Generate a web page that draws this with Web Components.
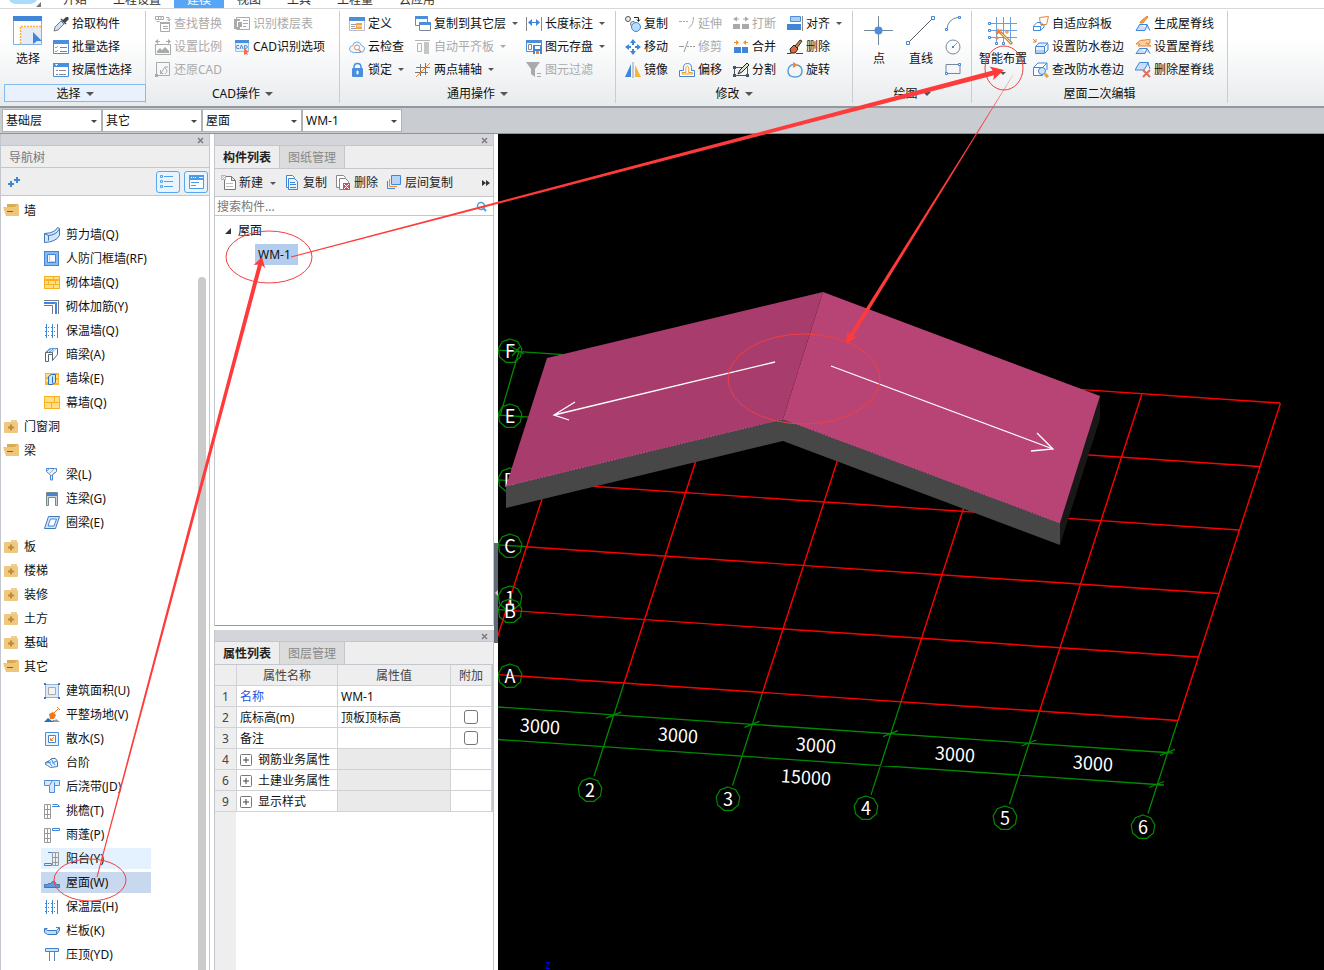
<!DOCTYPE html>
<html lang="zh-CN">
<head>
<meta charset="utf-8">
<title>建模</title>
<style>
html,body{margin:0;height:100%}
body{font:12px/16px "Noto Sans","Noto Sans CJK SC",sans-serif;color:#111;overflow:hidden}
</style>
</head>
<body>
<cad-shell></cad-shell>
<script>
const ICONS = {
  pick:'<path d="M1 15l1-4 6-6 3 3-6 6z" fill="#cfe2f6" stroke="#778"/><path d="M8 3l5 5M10 5l3-3q2-1 2 1l-3 3z" stroke="#444" stroke-width="1.500" fill="#444"/>',
  batch:'<path d="M.5 1.500h15v13H.5z" fill="#fff" stroke="#4a8fdc"/><path d="M0 1h16v4H0z" fill="#4a8fdc"/><path d="M2 8l1 1 2-2M2 12l1 1 2-2" stroke="#f0883a"/><path d="M7 8.500h7M7 12.500h7" stroke="#4a8fdc"/>',
  prop:'<path d="M.5 1.500h15v13H.5z" fill="#fff" stroke="#4a8fdc"/><path d="M0 1h16v4H0z" fill="#4a8fdc"/><path d="M2 2h3l-1.500 2z" fill="#fff"/><path d="M3 8.500h2m1 0h7M3 12.500h2m1 0h7" stroke="#889"/>',
  find:'<path d="M.5.5h8v3h-8zM3.500 1v2M6 1v2M11 1.500h3v3M12.500 3l1.500 2 1.500-2M5.500 6.500h9v9h-9zM8 10.500h5M8 12.500h5M1.500 5.500h3" stroke="#aaa"/><path d="M5 6h10v2H5z" fill="#aaa"/>',
  scale:'<path d="M.5 5.500h15v10H.5z" stroke="#aaa"/><path d="M2 14v-2l3-3 2 2 3-3 4 4v2zM0 2.500L3 0v5zM16 2.500L13 0v5z" fill="#aaa"/><path d="M2 2.500h3M11 2.500h3" stroke="#aaa"/>',
  restore:'<path d="M1.500.5h13v13h-13zM5.500 8v3.500h3M6 11l4-6h3M10 12q4-3 0-6" stroke="#aaa"/><path d="M0 12h3v3H0z" fill="#aaa"/>',
  floors:'<path d="M2.500 1.500h13v12h-13z" stroke="#aaa"/><path d="M0 3h6v2H2v6h4v2H0z" fill="#aaa"/><path d="M4 6h4v5H4z" fill="#aaa"/><path d="M9 4.500h5M9 7.500h5M9 10.500h3" stroke="#aaa"/>',
  cadopt:'<path d="M1.500 1.500h13v11h-13z" fill="#e5effb" stroke="#9cc2ee"/><path d="M1 1h14v3H1z" fill="#4a8fdc"/><path d="M5 6.500q-3-.5-3 1.500t3 1.500M6 10l1.500-4L9 10M10.500 6.500v3q3 0 3-1.500t-3-1.500" stroke="#4a8fdc"/><path d="M10 9l5 4-2 .5L14 16l-2-1-2 1z" fill="#f0704a"/>',
  define:'<path d="M.5 1.500h15v13H.5z" fill="#fff" stroke="#bbc"/><path d="M0 1h16v4H0z" fill="#4a8fdc"/><path d="M2 8.500h5M2 10.500h4M2 12.500h5" stroke="#99a"/><path d="M7 7h6v6H7z" fill="#f5a53c"/><path d="M8 10h5" stroke="#fff"/>',
  cloud:'<path d="M4.500 13.500h7q4-.5 4-3.500t-3-3.500Q11 2.500 7.500 3T4 6.500Q.5 7 .5 10t4 3.500z" stroke="#6aa7e8" fill="#f4f9ff"/><circle cx="8" cy="8.500" r="2.500" stroke="#e88040" fill="#fff"/><path d="M10 11l2 2" stroke="#e88040" stroke-width="1.500"/>',
  lock:'<path d="M5 8V5q0-3.500 3.500-3.500T12 5v3" stroke="#4a8fdc" stroke-width="1.500"/><rect x="3" y="6" width="11" height="9" rx="1" fill="#4a8fdc"/><path d="M8 9h1v3H8z" fill="#fff" stroke="#fff"/>',
  copyfloor:'<path d="M.5 1.500h12v8H.5z" fill="#fff" stroke="#7d8793"/><path d="M0 0h13v3H0z" fill="#4a8fdc"/><path d="M4.500 7.500h11v7h-11z" fill="#fff" stroke="#7d8793"/><path d="M4 6h12v3H4z" fill="#4a8fdc"/>',
  align2:'<path d="M0 1.500h15M2.500 4.500h4v8h-4z" stroke="#b5b5b5"/><path d="M9 3h5v12H9z" fill="#c5c5c5"/>',
  axis:'<path d="M1 5.500h14M0 10.500h13M5.500 2v12M10.500 1v12" stroke="#777"/><path d="M1 15L15 1" stroke="#f09050"/>',
  length:'<path d="M.5 1v14M15.500 1v14" stroke="#888"/><path d="M2 6.500L6 3v7zM14 6.500L10 3v7z" fill="#3f86d8"/><path d="M4 6.500h8" stroke="#3f86d8"/>',
  save:'<path d="M.5 1.500h15v11H.5z" fill="#fff" stroke="#4a8fdc"/><path d="M0 1h16v3H0z" fill="#4a8fdc"/><path d="M2.500 5.500h3v5h-3z" stroke="#888"/><path d="M7 6h9v9H7z" fill="#3f86d8"/><path d="M9 7h5v3H9z" fill="#fff"/><path d="M9 12h5v3H9z" fill="#fff"/><path d="M10 12h3v3h-3z" fill="#f08030"/>',
  filter:'<path d="M0 0h14L9 7v8l-4-3V7z" fill="#aaa"/><path d="M11 11.500h4M11 14.500h4" stroke="#aaa"/>',
  copy:'<circle cx="3" cy="3" r="2.500" stroke="#555" fill="#eee"/><path d="M9 1.500h4.500V5M12 3.500l1.500 2 1.500-2" stroke="#222"/><circle cx="8" cy="8" r="2.500" fill="#eee" stroke="#678"/><circle cx="11" cy="11" r="4.500" fill="#b9dcfa" stroke="#3a8bcb"/>',
  extend:'<path d="M0 5.500h3m1 0h2m1 0h2M14.500 1q0 8-5 11" stroke="#aaa"/>',
  breaks:'<path d="M0 8h7v5H0zM9 8h7v5H9zM0 3l4-2.500v5zM16 3l-4-2.500v5z" fill="#aaa"/><path d="M3 3h3M10 3h3" stroke="#aaa"/>',
  align:'<path d="M3.500.5h10v5h-10z" fill="#a9cdf5" stroke="#4a8fdc"/><path d="M0 8h14v6H0z" fill="#3f86d8"/><path d="M15.500 0v15" stroke="#888"/>',
  move:'<path d="M8 0l3 4H5zM8 16l3-4H5zM0 8l4-3v6zM16 8l-4-3v6z" fill="#3f86d8"/><path d="M8 4v2M8 10v2M4 8h2M10 8h2" stroke="#3f86d8" stroke-width="2"/>',
  trim:'<path d="M0 7.500h5m3 0h2m1 0h2m1 0h2M9 2L5 13" stroke="#999"/>',
  merge:'<path d="M1 8h7v6H1zM9 8h6v6H9z" fill="#3f86d8"/><path d="M6 3.500L3 1v5zM10 3.500L13 1v5z" fill="#f09030"/><path d="M1 3.500h3M12 3.500h3" stroke="#f09030"/>',
  erase:'<path d="M0 14.500h4m5 0h7" stroke="#444"/><path d="M8 7l5-6 2 1-5 7z" fill="#c08a50" stroke="#333"/><path d="M3 10l4-4 4 4-3 4H4z" fill="#e06a40" stroke="#222"/>',
  mirror:'<path d="M6 2v13H0z" fill="#3f86d8"/><path d="M10 3v12h6z" fill="#f5b43c"/><path d="M8 0v16" stroke="#999"/>',
  offset:'<path d="M.5 14.500v-6h4q-1-7 4-7 5 0 4 7h3v6z" stroke="#3f86d8" fill="#fff"/><path d="M3 12V10.500h4q-1-6 1.500-6.500 2 1 1 6.500h4V12z" stroke="#f0a030"/>',
  split:'<path d="M1.500 5.500h13v8h-13z" stroke="#555"/><path d="M0 4h3v3H0zM0 12h3v3H0zM13 12h3v3h-3z" fill="#456"/><path d="M5 12l2-4 7-7 2 2-7 7z" fill="#dfe5cc" stroke="#222"/>',
  rotate:'<path d="M10 3q5 1 5 6 0 6-7 6T1 9q0-5 5-6.500" stroke="#5ca0dc" stroke-width="1.500"/><path d="M6 0l5 3-5 3z" fill="#f08a30"/>',
  arc:'<path d="M2 14Q2 3 14 1" stroke="#789"/><path d="M.5 12.500h2v2h-2zM13.500.5h2v2h-2z" fill="#fff" stroke="#3f86d8"/>',
  circle:'<circle cx="8" cy="8" r="7" stroke="#789"/><path d="M8 8l4-4" stroke="#999"/><path d="M7 7h2v2H7z" fill="#3f86d8"/>',
  rect:'<path d="M1 2.500h14v9H1z" stroke="#789"/><path d="M.5 10.500h2v2h-2zM13.500 1.500h2v2h-2z" fill="#fff" stroke="#3f86d8"/>',
  slope:'<path d="M6.500 1.500l9-1-2 8-6 0z" stroke="#f08030" fill="#fff"/><path d="M.5 10.500h7v4h-7zM.5 10L4 6.500h4l2 2-2.500 2M8 14l3-3V9" stroke="#3f86d8"/>',
  water:'<path d="M2.500 7.500h9v7h-9zM3 7l3-3h9l-3 3M12 14l3-3V5" stroke="#3f86d8" fill="#e4f0fd"/><path d="M3 11h8v3H3z" fill="#a9cdf5"/><path d="M0 0l3 3M3 0v3H0" stroke="#f08030"/>',
  checkwater:'<path d="M.5 5.500h9v8h-9zM1 5l4-4h9l-4 4M14 1v7" stroke="#3f86d8" fill="#fff"/><circle cx="9" cy="9" r="3.500" fill="#cfe3fa" stroke="#3f86d8"/><path d="M12 12l3 3" stroke="#f0a030" stroke-width="3"/>',
  ridge:'<path d="M5 8.500h7l3 6M5 8L1 14.500h9l2-6" stroke="#3f86d8" fill="#c9defa"/><path d="M5 7l1-2 6-5 1 1-5 6z" fill="#f5a050" stroke="#f08030"/>',
  setridge:'<path d="M5 9.500h7l3 5M5 9L1 14.500h9l2-5" stroke="#3f86d8" fill="#c9defa"/><path d="M1 5q4-5 9-4l5-1v4q-3 1-4 0l5 3H3l2-2z" fill="#fbd0a0" stroke="#f08030"/>',
  delridge:'<path d="M4.500.5h9L9 8H0zM13 1l2 6" stroke="#3f86d8" fill="#c9defa"/><path d="M8 8l7 7M15 8l-7 7" stroke="#e07060" stroke-width="2"/>',
  open:'<path d="M4 1h11v3H4z" fill="#dbab52"/><path d="M0 4h12l1-2h3v11H3z" fill="#efc57a"/><path d="M4 8h6v1H4z" fill="#806030"/>',
  folder:'<path d="M8 1h6v2H8z" fill="#e9d09c"/><rect x="1" y="3" width="14" height="11" rx="1" fill="#f0c880"/><path d="M5 8.500h6M8 5.500v6" stroke="#c08c30" stroke-width="2"/>',
  shear:'<path d="M.5 6.500Q11 6 13.500.5l2 1v7Q12 15 .5 15.500z" stroke="#3f78b8" fill="#d5e6fa"/><path d="M.5 6.500l4 2v5M4.500 8.500Q12 8 15.500 2" stroke="#3f78b8"/>',
  frame:'<path d="M0 0h15v15H0z" fill="#3f86d8"/><path d="M1 1h13v13H1z" fill="#8ab8ee"/><path d="M3.500 3.500h8v8h-8z" fill="#fff" stroke="#3f86d8"/><path d="M5.500 4v6.500h5" stroke="#bcd"/>',
  brick:'<path d="M0 1h16v13H0z" fill="#fbb020"/><path d="M1 2h8v2H1zM10 2h5v2h-5zM1 6h3v3H1zM5 6h6v3H5zM12 6h3v3h-3zM1 10h8v3H1zM10 10h5v3h-5z" fill="#ffe08a"/>',
  rebar:'<path d="M0 1.500h14.500V15M0 6.500h8.500V15" stroke="#778"/><path d="M0 4.500h11.500V15M0 3.500h12.500V15" stroke="#3f86d8"/>',
  insul:'<path d="M2.500 1v14M8.500 1v14M13.500 1v14" stroke="#3f86d8"/><path d="M1 4.500h13M1 8.500h13M1 12.500h13" stroke="#3f86d8" stroke-dasharray="1 2"/>',
  beamA:'<path d="M1.500 5.500l5-4h7v6l-5 6V6M1.500 5.500h7v1M1.500 5.500v9h3v-7h4" stroke="#567"/><path d="M2 5l4-4h7l-4 4z" fill="#5a9be0"/><path d="M4 5l4-3M7 5l4-3" stroke="#fff"/>',
  pier:'<path d="M1 2h14v12H1z" fill="#fcb42c"/><path d="M2 3h4v3H2zM11 4h3v3h-3zM2 8h3v3H2zM11 9h3v3h-3z" fill="#ffe08a"/><path d="M4.500 5.500l3-2h4v8l-3 2h-4zM8.500 5.500v7" stroke="#2a70c0" fill="#cfe3fa"/>',
  curtain:'<path d="M0 1h16v13H0z" fill="#fbb020"/><path d="M1 2h9v5H1zM11 2h4v5h-4zM1 8h6v5H1zM8 8h7v5H8z" fill="#ffe08a"/>',
  tee:'<path d="M2.500 1.500h10v3l-4 3.500v5h-2V8l-4-3.500z" stroke="#3f86d8" fill="#e8f2fd"/><path d="M3 4l3-3M6 6l5-5M7 9l4-4" stroke="#9ab"/>',
  link:'<path d="M2.500 1.500h11v13h-2v-8h-7v8h-2z" fill="#cfd5dc" stroke="#788"/><path d="M3 2h10v3H3z" fill="#3f86d8"/>',
  ring:'<path d="M4.500 1.500h11l-4 12H.5z" stroke="#3f78b8" fill="#d5e6fa"/><path d="M6.500 4h6L10 11H4z" stroke="#3f86d8" fill="#fff"/>',
  area:'<path d="M1.500 1.500h13v13h-13z" fill="#dceafb" stroke="#8fb3dc"/><path d="M4.500 4.500h7v7h-7z" stroke="#aaa" fill="#f3f3f3"/><path d="M0 0h2v2H0zM14 0h2v2h-2zM0 14h2v2H0zM14 14h2v2h-2z" fill="#3f78b8"/>',
  ground:'<path d="M0 15l4-4 4 3 2-1 2 2z" fill="#2a70b8"/><path d="M9 15l3-3 4 3z" fill="#999"/><path d="M5 7l4-2 3 3-2 4H6z" fill="#f07818"/><path d="M10 6l5-5M13 0l3 3" stroke="#f07818"/>',
  apron:'<path d="M1.500 1.500h13v13h-13z" stroke="#4a8fdc" fill="#e9f3fe"/><path d="M4.500 4.500h7v7h-7z" stroke="#3f86d8" fill="#fff"/><path d="M10 6l-3 3M6.500 7v2.500H9" stroke="#f08030"/>',
  steps:'<path d="M1.500 7.500l4-2 2-2h4l2 3 0 5-7 1-3-2-2-1z" stroke="#3f78b8" fill="#eaf3fe"/><path d="M4 6l4 5M7 4l4 6M2 8l5-1M8 8l5-2" stroke="#3f86d8"/>',
  pour:'<path d="M.5 1.500h15v5h-5v7h-5v-7h-5zM5.500 6.500l3-5M10.500 6.500V3" stroke="#4a8fdc" fill="#d9e9fb"/>',
  eave:'<path d="M.5 1.500h6v14h-6zM3.500 2v13M1 6.500h5M1 11.500h5" stroke="#999"/><path d="M8.500 1.500h5l2 2M8 3.500h8" stroke="#3f86d8"/>',
  canopy:'<path d="M.5 1.500h6v14h-6zM3.500 2v13M1 6.500h5M1 11.500h5" stroke="#999"/><path d="M8.500 1.500h7v2h-7z" stroke="#3f86d8"/>',
  balcony:'<path d="M8.500 1.500h6v13h-6zM11.500 2v13M9 6.500h5M9 11.500h5" stroke="#999"/><path d="M4 1.500h4M.5 12.500h7v2h-7z" stroke="#3f86d8"/>',
  roof:'<path d="M.5 12.500v-3h3l1-1h2l2-2h2l2 3h3v3z" fill="#5a9be0" stroke="#3f78b8"/>',
  panel:'<path d="M.5 5.500l3 2h9l3-3v3l-3 4h-9l-3-2z" stroke="#3f78b8" fill="#bfd9f6"/><path d="M12.500 7.500v4M.5 5.500h3M12 4.500h3" stroke="#3f86d8"/>',
  coping:'<path d="M1.500 1.500h13v3h-13z" stroke="#3f86d8" fill="#cfe3fa"/><path d="M5.500 5v9M10.500 5v9" stroke="#5a86b8"/>',
  plus2:'<path d="M4 7v6M1 10h6M10 3v6M7 6h6" stroke="#3f86d8" stroke-width="2"/>',
  list:'<path d="M.5 1.500h2v2h-2zM.5 6.500h2v2h-2zM.5 11.500h2v2h-2zM4 2.500h9M4 7.500h9M4 12.500h9" stroke="#4fa3e8"/>',
  window:'<path d="M1.500 1.500h14v13h-14z" stroke="#4a9be8" fill="#fff"/><path d="M1 1h15v5H1z" fill="#4a9be8"/><path d="M3 3.500h1m1 0h1m1 0h1M11 3.500h4" stroke="#fff"/><path d="M3 8.500h8M3 11.500h5" stroke="#4a9be8"/>',
  newdoc:'<path d="M3.500 1.500h7l4 4v9h-11zM10.500 1.500v4h4" stroke="#777" fill="#fff"/><path d="M5 8.500h7M5 11.500h7" stroke="#bbb"/><path d="M0 0h5v5H0z" fill="#f5b040"/><path d="M1 1h1v1H1zM3 1h1v1H3zM2 2h1v1H2zM1 3h1v1H1zM3 3h1v1H3z" fill="#fff"/>',
  doc:'<path d="M1.500.5h6l2 2v10h-8z" stroke="#3f86d8" fill="#fff"/><path d="M3.500 3.500h6l3 3v8h-9z" stroke="#3f86d8" fill="#e9f3fe"/><path d="M5 7.500h5M5 9.500h6M5 12.500h6" stroke="#3f86d8"/>',
  deldoc:'<path d="M.5.5h7l2 2v10h-9z" stroke="#888" fill="#fff"/><path d="M3.500 3.500h6l3 3v8h-9z" stroke="#888" fill="#fff"/><path d="M7 8h7v7H7z" fill="#d05050"/><path d="M8 9l5 5M13 9l-5 5" stroke="#fff"/>',
  layers:'<path d="M4.500.5h9v9h-9z" fill="#b4d4fa" stroke="#3f86d8"/><path d="M2.500 4v7.500H10" stroke="#f08a30"/><path d="M.5 6v7.500H8" stroke="#3f86d8"/>',
  search:'<circle cx="8" cy="8" r="3.500" stroke="#4aa0d8" stroke-width="1.500"/><path d="M10 10l3 3" stroke="#4aa0d8" stroke-width="2"/>',
  // thirty-pixel icons
  bigselect:'<path d="M.5.5h28v28H.5z" fill="#fff" stroke="#7db0e8"/><path d="M0 0h29v5H0z" fill="#3f86d8"/><path d="M8 11h20v17H8z" fill="#e6ebf5"/><path d="M7.500 28V10.500H28" stroke="#f5b43c" stroke-width="1.500" stroke-dasharray="2 1"/><path d="M20 16l9 9h-5l-4 3z" fill="#3f86d8"/>',
  bigpoint:'<path d="M14.500 0v29M0 14.500h29" stroke="#789"/><circle cx="14.500" cy="14.500" r="4" fill="#4a8fdc"/>',
  bigline:'<path d="M2 27L27 2" stroke="#556"/><path d="M.5 25.500h3v3h-3zM25.500.5h3v3h-3z" fill="#fff" stroke="#3f86d8"/>',
  biggrid:'<path d="M0 7.500h29M0 14.500h29M0 21.500h29M8.500 1v27M15.500 1v27M22.500 1v27" stroke="#6a9fe0"/><path d="M.5 6.500h2v2h-2zM.5 13.500h2v2h-2zM.5 20.500h2v2h-2zM7.500 26.500h2v2h-2zM14.500 26.500h2v2h-2z" fill="#fff" stroke="#3f86d8"/><path d="M12 16l12 12" stroke="#c88a40" stroke-width="3"/><path d="M13 17l10 10" stroke="#fbe0b0"/><path d="M10 12l1 2 3-1-2 3 2 2-3-1-2 2v-2l-2-1 2-1z" fill="#f08030"/><path d="M19 14v4M17 16h4M9 20v4M7 22h4" stroke="#f08030"/>'
};

/* Defines an element whose open shadow root is filled by render(host). */
function define(tag, css, render) {
  customElements.define(tag, class extends HTMLElement {
    connectedCallback() {
      if (this.shadowRoot) return;
      const root = this.attachShadow({mode: 'open'});
      root.innerHTML = `<style>*{box-sizing:border-box}button,select,input{font:inherit;color:inherit;margin:0}${css}</style>${render(this)}`;
    }
  });
}
const attr = (el, n) => el.getAttribute(n) || '';

define('ui-icon', ':host{display:block;flex:none;width:16px;height:16px}:host([big]){width:30px;height:30px}svg{display:block;width:100%;height:100%}',
  el => { const s = el.hasAttribute('big') ? 30 : 16;
    return `<svg viewBox="0 0 ${s} ${s}" fill="none" aria-hidden="true">${ICONS[attr(el, 'name')]}</svg>`; });

define('menu-strip', `
  :host{display:block;flex:none;height:9px;overflow:hidden;background:#fff;border-bottom:1px solid #d8d8d8}
  nav{display:flex;align-items:flex-end;height:8px}
  a{flex:none;padding:8px 13px 0;line-height:16px;color:#333;text-decoration:none}
  a[aria-current]{background:#56a6f5;color:#fff}
  .logo{flex:none;width:50px;height:28px}`,
  () => `<nav><svg class="logo" viewBox="0 0 50 28"><rect x="8" y="2" width="30" height="22" rx="8" fill="#a8dcfa"/><rect x="16" y="6" width="14" height="14" rx="5" fill="#7ec8f4"/><path d="M41 22v5h-5z" fill="#777"/></svg>
  ${['开始','工程设置','建模','视图','工具','工程量','云应用'].map(t => `<a href="#"${t === '建模' ? ' aria-current="page"' : ''}>${t}</a>`).join('')}</nav>`);

define('tool-button', `
  :host{display:flex;height:23px}
  button{display:flex;align-items:center;gap:3px;padding:0;border:0;background:none;white-space:nowrap}
  button:disabled{color:#aaa}
  i{margin-left:3px;border:3px solid transparent;border-top-color:#555;border-bottom:0}
  button:disabled i{border-top-color:#aaa}
  :host([big]){height:69px}
  :host([big]) button{flex-direction:column;justify-content:flex-start;padding-top:4px;gap:5px}
  :host([big]) i{margin:0}`,
  el => `<button type="button"${el.hasAttribute('off') ? ' disabled' : ''} aria-label="${attr(el, 'label') || attr(el, 'icon')}"><ui-icon name="${attr(el, 'icon')}"${el.hasAttribute('big') ? ' big' : ''}></ui-icon>${attr(el, 'label') ? `<span>${attr(el, 'label')}</span>` : ''}${el.hasAttribute('drop') ? '<i></i>' : ''}</button>`);

define('ribbon-group', `
  :host{display:flex;flex-direction:column;flex:none;margin:2px 0 3px;padding-top:1px;border-right:1px solid #c9ccd0}
  .tools{display:flex;height:69px}
  footer{display:flex;align-items:center;justify-content:center;gap:5px;height:18px;margin-top:3px;padding-top:2px}
  :host([active]) footer{margin-left:4px;margin-right:-1px;border:1px solid #86b9f0;background:#e9f2fc}
  i{border:4px solid transparent;border-top-color:#555;border-bottom:0}`,
  el => `<div class="tools"><slot></slot></div><footer><span>${attr(el, 'caption')}</span>${el.hasAttribute('plain') ? '' : '<i></i>'}</footer>`);

const tool = ([icon, label = '', flags = '']) => `<tool-button icon="${icon}" label="${label}" ${flags}></tool-button>`;
const column = (left, ...tools) => `<div style="margin-left:${left}px">${tools.map(tool).join('')}</div>`;
const fixed = (left, width, ...tools) => `<div style="margin-left:${left}px;width:${width}px">${tools.map(tool).join('')}</div>`;
define('ribbon-bar', `
  :host{display:flex;flex:none;height:99px;background:linear-gradient(#fff 30%,#e8ebed);border-bottom:2px solid #94979c;overflow:hidden}`,
  () => `
  <ribbon-group caption="选择" active style="width:146px">${column(13,['bigselect','选择','big'])}${column(10,['pick','拾取构件'],['batch','批量选择'],['prop','按属性选择'])}</ribbon-group>
  <ribbon-group caption="CAD操作" style="width:194px">${fixed(9,79,['find','查找替换','off'],['scale','设置比例','off'],['restore','还原CAD','off'])}${column(0,['floors','识别楼层表','off'],['cadopt','CAD识别选项'])}</ribbon-group>
  <ribbon-group caption="通用操作" style="width:276px">${fixed(9,66,['define','定义'],['cloud','云检查'],['lock','锁定','drop'])}${fixed(0,111,['copyfloor','复制到其它层','drop'],['align2','自动平齐板','drop off'],['axis','两点辅轴','drop'])}${column(0,['length','长度标注','drop'],['save','图元存盘','drop'],['filter','图元过滤','off'])}</ribbon-group>
  <ribbon-group caption="修改" style="width:237px">${fixed(9,54,['copy','复制'],['move','移动'],['mirror','镜像'])}${fixed(0,54,['extend','延伸','off'],['trim','修剪','off'],['offset','偏移'])}${fixed(0,54,['breaks','打断','off'],['merge','合并'],['split','分割'])}${column(0,['align','对齐','drop'],['erase','删除'],['rotate','旋转'])}</ribbon-group>
  <ribbon-group caption="绘图" style="width:119px">${column(11,['bigpoint','点','big'])}${column(12,['bigline','直线','big'])}${column(9,['arc'],['circle'],['rect'])}</ribbon-group>
  <ribbon-group caption="屋面二次编辑" plain style="width:256px">${column(7,['biggrid','智能布置','big drop'])}${fixed(6,102,['slope','自适应斜板'],['water','设置防水卷边'],['checkwater','查改防水卷边'])}${column(0,['ridge','生成屋脊线'],['setridge','设置屋脊线'],['delridge','删除屋脊线'])}</ribbon-group>`);

define('scope-bar', `
  :host{display:flex;flex:none;align-items:center;height:26px;padding-left:2px;background:#c9ccd1;border-bottom:1px solid #8f9298}
  .box{position:relative;display:flex}
  select{width:100px;height:23px;padding:0 3px;border:1px solid #b0b2b6;border-radius:0;background:#fff;appearance:none}
  .box:first-child select{border-color:#8497c8}
  .box::after{content:"";position:absolute;right:5px;top:11px;border:3px solid transparent;border-top-color:#444;border-bottom:0;pointer-events:none}`,
  () => ['基础层','其它','屋面','WM-1'].map((t, i) => `<label class="box"><select aria-label="${['楼层','类别','构件类型','构件'][i]}"><option>${t}</option></select></label>`).join(''));

define('panel-title', `
  :host{display:flex;flex:none;justify-content:flex-end;height:12px;background:#d3d5da;border-bottom:1px solid #c3c6cc}
  button{display:flex;align-items:flex-end;justify-content:center;width:18px;padding:0 0 1px;border:0;background:none}
  svg{width:7px;height:7px}`,
  () => '<button type="button" aria-label="关闭"><svg viewBox="0 0 7 7"><path d="M1 1l5 5M6 1L1 6" stroke="#777" stroke-width="1.300"/></svg></button>');

const TREE = [
  ['墙', [['shear','剪力墙(Q)'],['frame','人防门框墙(RF)'],['brick','砌体墙(Q)'],['rebar','砌体加筋(Y)'],['insul','保温墙(Q)'],['beamA','暗梁(A)'],['pier','墙垛(E)'],['curtain','幕墙(Q)']]],
  ['门窗洞'],
  ['梁', [['tee','梁(L)'],['link','连梁(G)'],['ring','圈梁(E)']]],
  ['板'], ['楼梯'], ['装修'], ['土方'], ['基础'],
  ['其它', [['area','建筑面积(U)'],['ground','平整场地(V)'],['apron','散水(S)'],['steps','台阶'],['pour','后浇带(JD)'],['eave','挑檐(T)'],['canopy','雨蓬(P)'],['balcony','阳台(Y)','hover'],['roof','屋面(W)','selected'],['insul','保温层(H)'],['panel','栏板(K)'],['coping','压顶(YD)']]]
];
define('nav-tree', `
  :host{display:flex;flex-direction:column;flex:none;width:210px;background:#fff;border:solid #c3c6cc;border-width:0 1px}
  h2{flex:none;height:22px;margin:0;padding-left:8px;font:inherit;line-height:23px;color:#777;background:#eee;border-bottom:1px solid #c3c6cc}
  .bar{display:flex;flex:none;align-items:center;gap:4px;height:28px;padding:0 1px 0 6px;background:#eee;border-bottom:1px solid #c3c6cc}
  .bar button{display:flex;align-items:center;justify-content:center;width:24px;height:22px;padding:0;border:1px solid #58a8f0;border-radius:3px;background:#eaf4fe}
  .bar .add{width:16px;margin-right:auto;border:0;background:none}
  .body{display:flex;flex:1;min-height:0}
  ul{margin:0;padding:0;list-style:none}
  .tree{flex:1;padding-top:3px;overflow:hidden}
  .row{display:flex;align-items:center;height:24px;padding:0;border:0;background:none}
  .parent{gap:5px;padding-left:2px}
  .row.leaf{align-items:flex-start;padding:1px 0 0 40px}
  .leaf span{display:flex;align-items:center;gap:6px;height:21px;min-width:110px;padding:0 3px}
  .hover span{background:#e4f1fe}.selected span{background:#c8d8ef}
  .track{flex:none;width:8px;margin:81px 3px 0 0;border-radius:4px 4px 0 0;background:#cbcbcb}`,
  () => `<panel-title></panel-title><h2>导航树</h2>
  <div class="bar"><button class="add" type="button" aria-label="添加"><ui-icon name="plus2"></ui-icon></button><button type="button" aria-label="列表"><ui-icon name="list"></ui-icon></button><button type="button" aria-label="窗口"><ui-icon name="window"></ui-icon></button></div>
  <div class="body"><ul class="tree">${TREE.map(([name, kids]) => `<li><button type="button" class="row parent" aria-expanded="${!!kids}"><ui-icon name="${kids ? 'open' : 'folder'}"></ui-icon>${name}</button>${kids ? `<ul>${kids.map(([icon, label, state = '']) => `<li><button type="button" class="row leaf ${state}"><span><ui-icon name="${icon}"></ui-icon>${label}</span></button></li>`).join('')}</ul>` : ''}</li>`).join('')}</ul><div class="track"></div></div>`);

define('dock-panel', `
  :host{display:flex;flex-direction:column;background:#fff;border:solid #c3c6cc;border-width:0 1px}
  .tabs{display:flex;flex:none;height:23px;background:#eee;border-bottom:1px solid #c3c6cc}
  button{width:65px;padding:2px 0 0;border:0;border-right:1px solid #c3c6cc;background:#dcdcdc;color:#888}
  button:first-child{background:#eee;color:#222;font-weight:700}`,
  el => `<panel-title></panel-title><div class="tabs" role="tablist">${attr(el, 'tabs').split(',').map((t, i) => `<button type="button" role="tab" aria-selected="${!i}">${t}</button>`).join('')}</div><slot></slot>`);

define('component-list', `
  :host{display:flex;flex-direction:column;flex:1}
  .bar{display:flex;flex:none;align-items:center;height:28px;padding:1px 3px 0 6px;background:#eee;border-bottom:1px solid #c3c6cc;color:#222}
  .bar button{display:flex;align-items:center;gap:2px;padding:0;margin-right:9px;border:0;background:none;white-space:nowrap}
  .bar i{margin-left:5px;border:3px solid transparent;border-top-color:#555;border-bottom:0}
  .bar .more{margin:0 0 0 auto}
  .find{display:flex;flex:none;align-items:center;height:19px;padding-right:4px;border-bottom:1px solid #c3c6cc}
  input{flex:1;min-width:0;height:18px;padding:1px 2px 0;border:0;outline:0;background:none}
  input::placeholder{color:#777;opacity:1}
  .tree{flex:1;padding:5px 0 0 10px;border-bottom:1px solid #999}
  .node,.leaf{display:flex;align-items:center;border:0;padding:0;background:none}
  .node{gap:7px;height:20px}
  .leaf{width:43px;height:21px;margin:3px 0 0 30px;padding:0 3px;background:#b3cdef}`,
  () => `<div class="bar"><button type="button"><ui-icon name="newdoc"></ui-icon>新建<i></i></button><button type="button"><ui-icon name="doc"></ui-icon>复制</button><button type="button"><ui-icon name="deldoc"></ui-icon>删除</button><button type="button"><ui-icon name="layers"></ui-icon>层间复制</button><button type="button" class="more" aria-label="更多"><svg width="8" height="6"><path d="M0 0l4 3-4 3zM4 0l4 3-4 3z" fill="#333"/></svg></button></div>
  <label class="find"><input type="text" placeholder="搜索构件..." aria-label="搜索构件"><ui-icon name="search"></ui-icon></label>
  <div class="tree"><button type="button" class="node"><svg width="6" height="6"><path d="M6 0v6H0z" fill="#333"/></svg>屋面</button><button type="button" class="leaf">WM-1</button></div>`);

define('property-table', `
  :host{display:block;flex:1;background:linear-gradient(90deg,#eee 21px,#fff 21px)}
  table{width:100%;border-spacing:0;table-layout:fixed;background:#fff;border-right:1px solid #c3c6cc}
  th,td{height:21px;padding:2px 3px 0;border:solid #d0d2d5;border-width:0 1px 1px 0;text-align:left;font-weight:400;white-space:nowrap}
  thead th,tbody th{background:#eee;color:#444;text-align:center;padding:2px 0 0}
  .link{color:#1a55e8}.dim{background:#eaeaea}
  input{display:block;width:14px;height:14px;margin:0 auto;border:1px solid #777;border-radius:3px;background:#fff;appearance:none}
  td:last-child{padding-top:0}
  .expand{display:flex;align-items:center;gap:6px;padding:0;border:0;background:none}
  svg{display:block}`,
  () => { const rows = [[1,'名称','WM-1'],[2,'底标高(m)','顶板顶标高'],[3,'备注',''],[4,'钢筋业务属性'],[6,'土建业务属性'],[9,'显示样式']];
    return `<table><colgroup><col style="width:22px"><col style="width:101px"><col style="width:113px"><col></colgroup><thead><tr><th></th><th>属性名称</th><th>属性值</th><th>附加</th></tr></thead><tbody>${rows.map(([n, name, value]) => {
      const group = value === undefined;
      return `<tr><th scope="row">${n}</th><td class="${n === 1 ? 'link' : ''}">${group ? `<button type="button" class="expand"><svg width="12" height="12"><rect x="0.500" y="0.500" width="11" height="11" rx="1" fill="#fff" stroke="#777"/><path d="M3 6h6M6 3v6" stroke="#444"/></svg>${name}</button>` : name}</td><td class="${group ? 'dim' : ''}">${value || ''}</td><td>${n === 2 || n === 3 ? `<input type="checkbox" aria-label="附加 ${name}">` : ''}</td></tr>`; }).join('')}</tbody></table>`; });

/* Roof model over the axis grid; the group is shifted so that its coordinates are those of the window. */
const bubble = (x, y, t) => {
  const pts = Array.from({length: 9}, (_, i) => { const a = i * Math.PI / 4.5 - Math.PI / 2; return `${(x + 12 * Math.cos(a)).toFixed(1)},${(y + 12 * Math.sin(a)).toFixed(1)}`; }).join(' ');
  return `<polygon points="${pts}" stroke="#008a00" stroke-width="1.200"/><text x="${x}" y="${y + 7}">${t}</text>`;
};
const tick = (x, y) => `M${x - 8} ${y + 3}L${x + 7} ${y - 3}`;
define('model-view', `
  :host{display:block;flex:1;min-width:0;background:#000;overflow:hidden}
  svg{display:block;width:100%;height:100%}
  text{fill:#fff;stroke:none;font:18px "Noto Sans CJK SC",sans-serif;text-anchor:middle}
  .axis{fill:#0000ff;font-size:9px}`,
  () => {
    const right = [[1280,403],[1259.500,466.500],[1239,530],[1218.500,593.500],[1198,657],[1178,720.500]];
    const start = [589,565,547,526,506,485];
    let red = '', green = '';
    right.forEach(([x, y], i) => { const at = v => (y - (x - v) * .0676).toFixed(1);
      red += `M${start[i]} ${at(start[i])}L${x} ${y}`;
      if (start[i] > 498) green += `M498 ${at(498)}L${start[i]} ${at(start[i])}`; });
    for (let i = 0; i < 6; i++) { const x = 485.500 + 138.500 * i, y = 674 + 9.300 * i;
      red += `M${x} ${y}L${x + 102.500} ${y - 317.500}`;
      if (i) green += `M${x} ${y}L${x - 30} ${y + 93}`; }
    green += 'M498 707L1173 753M498 739.500L1164 785M519 351L500 416M510 346l14 8M512 356l8 -9';
    for (let i = 1; i < 6; i++) green += tick(475.500 + 138.500 * i, 705.800 + 9.300 * i);
    green += tick(1157, 784.500);
    return `<svg role="img" aria-label="屋面三维模型" fill="none"><g transform="translate(-498 -134)">
    <path d="${green}" stroke="#008a00" stroke-width="1.300"/><path d="${red}" stroke="#ff0000" stroke-width="1.400"/>
    ${[['F',351],['E',416],['D',480],['C',546],['1',598],['B',611],['A',676]].map(([t, y]) => bubble(510, y, t)).join('')}
    ${[[590,790,2],[728,799,3],[866,808,4],[1005,818,5],[1143,827,6]].map(b => bubble(...b)).join('')}
    ${[[540,726,'3000'],[678,735,'3000'],[816,745,'3000'],[955,754,'3000'],[1093,763,'3000'],[806,777,'15000']].map(([x, y, t]) => `<text transform="translate(${x} ${y}) rotate(4)" y="7">${t}</text>`).join('')}
    <path d="M506 486L783 419 1060 523V545L783 441 506 508z" fill="#474747"/>
    <path d="M1100 396V419L1060 545V523z" fill="#181818"/>
    <path d="M547 358L823 292 783 419 506 486z" fill="#a83c6c"/>
    <path d="M823 292L1100 396 1060 523 783 419z" fill="#b84476"/>
    <path d="M506 486L783 419 1060 523" stroke="#c9508a" stroke-dasharray="2 1"/>
    <path d="M775 362L554 415M575 402L554 415 569 420M831 366L1053 449M1037 433L1053 449 1031 451" stroke="#fff" stroke-width="1.300"/>
    <text class="axis" x="548" y="969">Z</text></g></svg>`; });

/* Review marks drawn over the whole window: each arrow widens towards its head. */
const arrow = (x1, y1, x2, y2, w, head, tail) => {
  const L = Math.hypot(x2 - x1, y2 - y1), ux = (x2 - x1) / L, uy = (y2 - y1) / L;
  const p = (d, o) => `${(x1 + ux * d - uy * o).toFixed(1)},${(y1 + uy * d + ux * o).toFixed(1)}`;
  return `<polygon points="${[p(0, tail), p(L - head, w / 2), p(L - head - 2, w + 2), p(L, 0), p(L - head - 2, -w - 2), p(L - head, -w / 2), p(0, -tail)].join(' ')}"/>`;
};
define('review-marks', ':host{position:absolute;inset:0;pointer-events:none}svg{display:block;width:100%;height:100%}',
  () => `<svg aria-hidden="true" fill="#ff3a3a">${arrow(97,877,262,257,4,8,.5)}${arrow(291,257,1004,70,5,11,.5)}${arrow(1013,75,846,344,4,10,.1)}
  <g fill="none" stroke="#f04040"><ellipse cx="90" cy="880" rx="36" ry="21"/><ellipse cx="269" cy="257" rx="43" ry="26"/><ellipse cx="1004" cy="68" rx="19" ry="22"/><ellipse cx="804" cy="379" rx="76" ry="45"/></g></svg>`);

define('cad-shell', `
  :host{position:relative;display:flex;flex-direction:column;height:100vh;overflow:hidden;background:#fff}
  main{display:flex;flex:1;min-height:0}
  .docks{display:flex;flex-direction:column;flex:none;width:280px;margin-left:4px}
  .top{flex:0 0 492px}.bottom{flex:1;margin-top:4px}
  .grip{display:flex;flex:none;flex-direction:column;width:4px;padding-top:409px}
  .grip button{display:flex;align-items:center;height:100px;padding:0;border:0;background:#616b76}`,
  () => `<menu-strip></menu-strip><ribbon-bar></ribbon-bar><scope-bar></scope-bar>
  <main><nav-tree></nav-tree>
  <div class="docks"><dock-panel class="top" tabs="构件列表,图纸管理"><component-list></component-list></dock-panel><dock-panel class="bottom" tabs="属性列表,图层管理"><property-table></property-table></dock-panel></div>
  <div class="grip"><button type="button" aria-label="收起"><svg width="4" height="6"><path d="M4 0v6L1 3z" fill="#ccc"/></svg></button></div>
  <model-view></model-view></main><review-marks></review-marks>`);
</script>
</body>
</html>
